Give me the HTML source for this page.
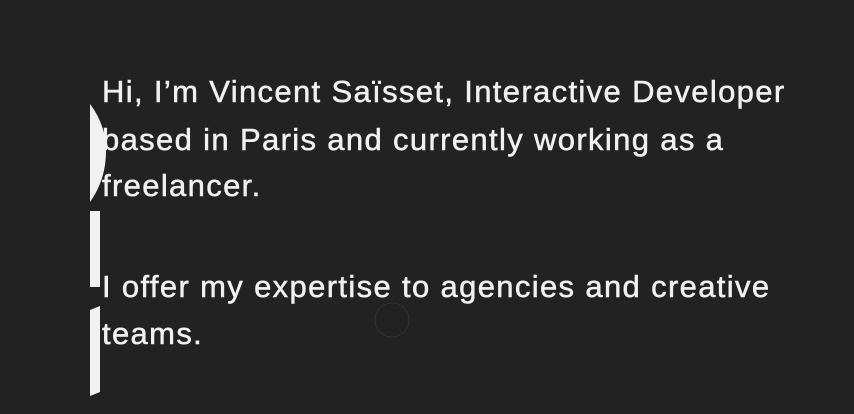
<!DOCTYPE html>
<html><head><style>
html,body{margin:0;padding:0;background:#222222;width:854px;height:414px;overflow:hidden}
.t{position:absolute;left:102px;color:#f1f1f1;font-family:"Liberation Sans",sans-serif;font-size:31px;white-space:nowrap;letter-spacing:1.35px;-webkit-text-stroke:0.5px #f1f1f1}
</style></head><body>
<svg width="854" height="414" style="position:absolute;left:0;top:0">
<path d="M90 104 Q110 130 105 165 Q102 185 90 202 Z" fill="#f1f1f1"/>
<rect x="90" y="211" width="10" height="76" fill="#f1f1f1"/>
<path d="M90 310 L100 306 L100 392 L90 396 Z" fill="#f1f1f1"/>
<circle cx="392" cy="320" r="17" fill="none" stroke="#333" stroke-width="1"/>
</svg>
<div class="t" style="top:74px">Hi, I’m Vincent Saïsset, Interactive Developer</div>
<div class="t" style="top:122px">based in Paris and currently working as a</div>
<div class="t" style="top:168px">freelancer.</div>
<div class="t" style="top:269px">I offer my expertise to agencies and creative</div>
<div class="t" style="top:316px">teams.</div>
</body></html>
